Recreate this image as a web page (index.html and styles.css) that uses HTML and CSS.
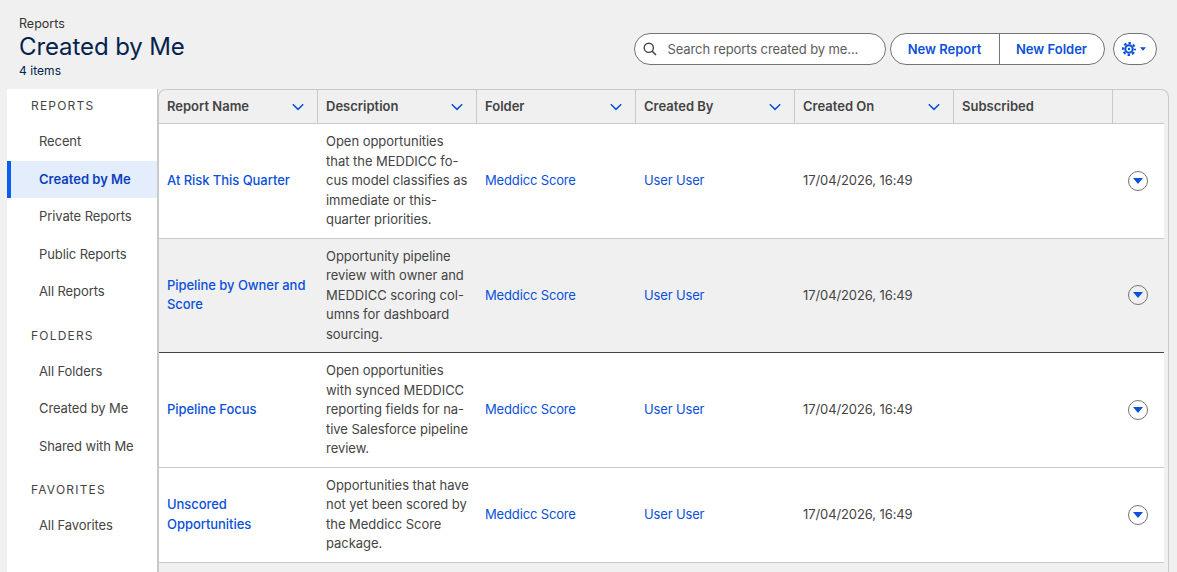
FILE: index.html
```html
<!DOCTYPE html>
<html lang="en">
<head>
<meta charset="utf-8">
<title>Reports</title>
<link rel="stylesheet" href="styles.css">
</head>
<body>
<svg class="sprites" width="0" height="0" aria-hidden="true">
  <symbol id="chev" viewBox="0 0 12 8"><path d="M0.8 1.2 6 6.4 11.2 1.2" fill="none" stroke="currentColor" stroke-width="1.5"/></symbol>
  <symbol id="tri" viewBox="0 0 10 6"><path d="M0 0h10L5.4 5.6a.5.5 0 0 1-.8 0z" fill="currentColor"/></symbol>
</svg>
<header class="page-head">
  <div class="titles">
    <div class="crumb">Reports</div>
    <h1 class="title">Created by Me</h1>
    <div class="count">4 items</div>
  </div>
  <div class="actions">
    <label class="search">
      <svg class="search-icon" viewBox="0 0 14 14"><circle cx="5.8" cy="5.8" r="4.6" fill="none" stroke="currentColor" stroke-width="1.4"/><path d="M9.2 9.2 13 13" stroke="currentColor" stroke-width="1.6" fill="none"/></svg>
      <span class="search-text">Search reports created by me...</span>
    </label>
    <div class="btn-group">
      <button class="btn">New Report</button>
      <button class="btn">New Folder</button>
    </div>
    <button class="gear-btn">
      <svg class="gear" viewBox="0 0 14 14">
        <circle cx="7" cy="7" r="5.9" fill="none" stroke="currentColor" stroke-width="2.2" stroke-dasharray="2.5 2.13" stroke-dashoffset="1.25"/>
        <circle cx="7" cy="7" r="3.7" fill="none" stroke="currentColor" stroke-width="2.1"/>
        <circle cx="7" cy="7" r="1.2" fill="currentColor"/>
      </svg>
      <svg class="gear-caret"><use href="#tri"/></svg>
    </button>
  </div>
</header>
<main class="content">
  <nav class="side">
    <div class="side-label">REPORTS</div>
    <a class="side-item">Recent</a>
    <a class="side-item active">Created by Me</a>
    <a class="side-item">Private Reports</a>
    <a class="side-item">Public Reports</a>
    <a class="side-item">All Reports</a>
    <div class="side-label spaced">FOLDERS</div>
    <a class="side-item">All Folders</a>
    <a class="side-item">Created by Me</a>
    <a class="side-item">Shared with Me</a>
    <div class="side-label spaced">FAVORITES</div>
    <a class="side-item">All Favorites</a>
  </nav>
  <section class="panel">
    <table class="grid">
      <colgroup>
        <col class="c1"><col class="c"><col class="c"><col class="c"><col class="c"><col class="c"><col class="c-last">
      </colgroup>
      <thead>
        <tr>
          <th><div class="th-in">Report Name<svg class="chev"><use href="#chev"/></svg></div></th>
          <th><div class="th-in">Description<svg class="chev"><use href="#chev"/></svg></div></th>
          <th><div class="th-in">Folder<svg class="chev"><use href="#chev"/></svg></div></th>
          <th><div class="th-in">Created By<svg class="chev"><use href="#chev"/></svg></div></th>
          <th><div class="th-in">Created On<svg class="chev"><use href="#chev"/></svg></div></th>
          <th><div class="th-in">Subscribed</div></th>
          <th class="th-last"></th>
        </tr>
      </thead>
      <tbody>
        <tr>
          <td><a class="name">At Risk This Quarter</a></td>
          <td class="desc">Open opportunities<br>that the MEDDICC fo-<br>cus model classifies as<br>immediate or this-<br>quarter priorities.</td>
          <td><a class="link">Meddicc Score</a></td>
          <td><a class="link">User User</a></td>
          <td>17/04/2026, 16:49</td>
          <td></td>
          <td class="act"><button class="row-btn"><svg class="tri"><use href="#tri"/></svg></button></td>
        </tr>
        <tr class="hover">
          <td><a class="name">Pipeline by Owner and<br>Score</a></td>
          <td class="desc">Opportunity pipeline<br>review with owner and<br>MEDDICC scoring col-<br>umns for dashboard<br>sourcing.</td>
          <td><a class="link">Meddicc Score</a></td>
          <td><a class="link">User User</a></td>
          <td>17/04/2026, 16:49</td>
          <td></td>
          <td class="act"><button class="row-btn"><svg class="tri"><use href="#tri"/></svg></button></td>
        </tr>
        <tr>
          <td><a class="name">Pipeline Focus</a></td>
          <td class="desc">Open opportunities<br>with synced MEDDICC<br>reporting fields for na-<br>tive Salesforce pipeline<br>review.</td>
          <td><a class="link">Meddicc Score</a></td>
          <td><a class="link">User User</a></td>
          <td>17/04/2026, 16:49</td>
          <td></td>
          <td class="act"><button class="row-btn"><svg class="tri"><use href="#tri"/></svg></button></td>
        </tr>
        <tr>
          <td><a class="name">Unscored<br>Opportunities</a></td>
          <td class="desc">Opportunities that have<br>not yet been scored by<br>the Meddicc Score<br>package.</td>
          <td><a class="link">Meddicc Score</a></td>
          <td><a class="link">User User</a></td>
          <td>17/04/2026, 16:49</td>
          <td></td>
          <td class="act"><button class="row-btn"><svg class="tri"><use href="#tri"/></svg></button></td>
        </tr>
      </tbody>
    </table>
  </section>
</main>
</body>
</html>
```
FILE: styles.css
```css
* { box-sizing: border-box; }
html, body { height: 100%; }
body {
  margin: 0;
  background: #f0f0f0;
  color: #444;
  font-family: Inter, "Noto Sans", sans-serif;
  font-size: 13px;
  line-height: 19.5px;
  letter-spacing: -0.1px;
  overflow: hidden;
  display: flex;
  flex-direction: column;
}
.sprites { position: absolute; }
.page-head {
  height: 89px;
  flex: none;
  display: flex;
  justify-content: space-between;
  padding: 15px 20px 0 19px;
}
.crumb { font-size: 12.5px; line-height: 17px; color: #333; letter-spacing: 0; }
.title { margin: 0; font-size: 24px; line-height: 30px; font-weight: 400; color: #03234d; }
.count { font-size: 12px; line-height: 18px; color: #03234d; letter-spacing: 0.05px; }
.actions { display: flex; align-items: flex-start; padding-top: 18px; }
.search {
  width: 252px; height: 32px;
  display: flex; align-items: center;
  padding: 1px 0 0 8px;
  background: #fff;
  border: 1px solid #747474;
  border-radius: 16px;
}
.search-icon { width: 14px; height: 14px; color: #444; flex: none; margin-top: -1px; }
.search-text { margin-left: 10.5px; color: #5c5c5c; }
.btn-group {
  display: flex;
  margin-left: 4px;
  height: 32px;
  background: #fff;
  border: 1px solid #747474;
  border-radius: 16px;
  overflow: hidden;
}
.btn {
  border: 0; background: transparent;
  font: 600 13px Inter, sans-serif;
  color: #0b50da;
  padding: 0 1px 0 0;
  width: 108px;
}
.btn + .btn { border-left: 1px solid #747474; width: 105px; }
.gear-btn {
  width: 44px; height: 32px;
  margin-left: 8px;
  background: #fff;
  border: 1px solid #747474;
  border-radius: 16px;
  padding: 0;
  display: flex; align-items: center; justify-content: center;
  color: #0b50da;
}
.gear { width: 14px; height: 14px; margin-left: -2px; }
.gear-caret { width: 6px; height: 4px; margin-left: 4px; color: #0b50da; }
.content { flex: 1; display: flex; margin: 0 8px 0 7px; min-height: 0; }
.side {
  width: 151px;
  flex: none;
  background: #fff;
  border-right: 1px solid #c9c9c9;
}
.side-label {
  height: 34px;
  padding-left: 24px;
  display: flex; align-items: center;
  font-size: 12px;
  letter-spacing: 1.2px;
  color: #444;
}
.side-label.spaced { margin-top: 8px; }
.side-item {
  display: flex; align-items: center;
  height: 37.5px;
  padding-left: 32px;
  color: #444;
}
.side-item.active {
  background: #e3edfb;
  border-left: 4px solid #0b5cf1;
  padding-left: 28px;
  color: #0b3fc0;
  font-weight: 600;
  letter-spacing: 0;
}
.panel {
  flex: 1;
  min-width: 0;
  border: 1px solid #c9c9c9;
  border-bottom: 0;
  border-radius: 8px 8px 0 0;
  overflow: hidden;
  padding-right: 4px;
}
.grid { border-collapse: separate; border-spacing: 0; table-layout: fixed; width: 1004px; }
.c1 { width: 159px; }
.c { width: 159px; }
.c-last { width: 51px; }
th {
  height: 34px;
  padding: 0;
  text-align: left;
  font-weight: 600;
  letter-spacing: 0;
  color: #444;
  border-bottom: 1px solid #c9c9c9;
  border-right: 1px solid #c9c9c9;
}
.th-last { border-right: 0; }
.th-in { display: flex; justify-content: space-between; align-items: center; padding: 0 13px 0 8px; }
.chev { width: 12px; height: 8px; color: #0b50da; flex: none; }
td {
  padding: 8px;
  background: #fff;
  border-bottom: 1px solid #c9c9c9;
  vertical-align: middle;
  color: #444;
  white-space: nowrap;
}
.desc { letter-spacing: -0.03px; }
.hover td { background: #f0f0f0; border-bottom-color: #444; }
.name { color: #0b50da; font-weight: 500; letter-spacing: -0.05px; }
.link { color: #0b50da; letter-spacing: -0.15px; }
.act { padding: 0 0 0 15px; }
.row-btn {
  width: 20px; height: 20px;
  padding: 0;
  background: #fff;
  border: 1px solid #747474;
  border-radius: 50%;
  display: flex; align-items: center; justify-content: center;
  color: #0b50da;
}
.hover .row-btn { background: #f0f0f0; }
.tri { width: 10px; height: 6px; }
```
